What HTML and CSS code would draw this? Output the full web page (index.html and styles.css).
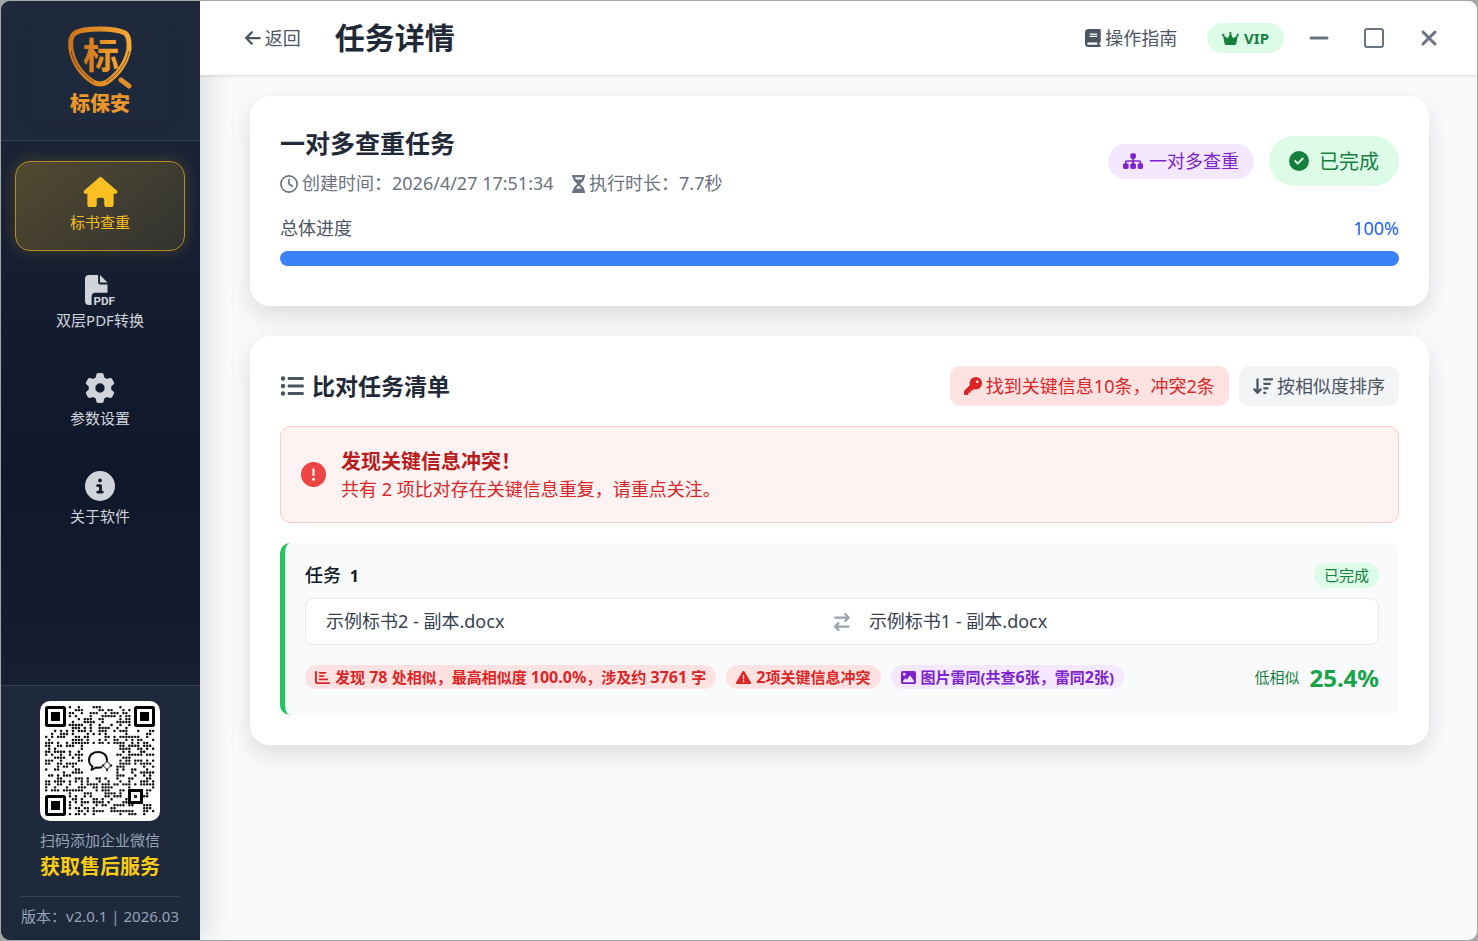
FILE: index.html
```html
<!DOCTYPE html>
<html lang="zh-CN">
<head>
	<meta charset="UTF-8">
	<title>任务详情</title>
	<link rel="stylesheet" href="styles.css">
</head>
<body>
	<div class="window">
		<aside class="sidebar">
			<div class="logo">
				<div class="logo-box">
					<svg class="logo-mark" viewBox="0 0 66 64" aria-hidden="true">
						<defs>
							<linearGradient id="gold" x1="0" y1="0" x2="1" y2="0">
								<stop offset="0" stop-color="#cf7418" />
								<stop offset="1" stop-color="#f5a733" />
							</linearGradient>
						</defs>
						<path d="M33 4C44 4 54 6 58 8C63 11 62 20 62 24C59 39 50 50 40 57Q33 61 26 57C15 50 6 38 4 24C3 15 4 11 8 8C13 5 23 4 33 4Z" fill="none" stroke="url(#gold)" stroke-width="5" />
						<path d="M4 26C7 40 17 51 27 57M62 26C59 40 49 51 39 57" fill="none" stroke="#1e293b" stroke-width="0.6" />
						<path d="M54 55L62 61" stroke="#e38f28" stroke-width="5" stroke-linecap="round" />
						<text class="logo-char" x="34" y="44" text-anchor="middle" fill="url(#gold)">标</text>
					</svg>
					<span class="logo-name">标保安</span>
				</div>
			</div>
			<nav class="menu">
				<a class="menu-item active" href="#">
					<svg class="menu-icon house" viewBox="0 0 576 512"><path d="M575.8 255.5c0 18-15 32.1-32 32.1l-32 0 .7 160.2c0 2.7-.2 5.4-.5 8.1l0 16.2c0 22.1-17.9 40-40 40l-16 0c-1.1 0-2.2 0-3.3-.1c-1.4 .1-2.8 .1-4.2 .1L416 512l-24 0c-22.1 0-40-17.9-40-40l0-24 0-64c0-17.7-14.3-32-32-32l-64 0c-17.7 0-32 14.3-32 32l0 64 0 24c0 22.1-17.9 40-40 40l-24 0-31.9 0c-1.5 0-3-.1-4.5-.2c-1.2 .1-2.4 .2-3.6 .2l-16 0c-22.1 0-40-17.9-40-40l0-112c0-.9 0-1.9 .1-2.8l0-69.7-32 0c-18 0-32-14-32-32.1c0-9 3-17 10-24L266.4 8c7-7 15-8 22-8s15 2 21 7L564.8 231.5c8 7 12 15 11 24z" /></svg>
					<span>标书查重</span>
				</a>
				<a class="menu-item" href="#">
					<svg class="menu-icon" viewBox="0 0 512 512"><path d="M0 64C0 28.7 28.7 0 64 0L224 0l0 128c0 17.7 14.3 32 32 32l128 0 0 144-208 0c-35.3 0-64 28.7-64 64l0 144-48 0c-35.3 0-64-28.7-64-64L0 64zm384 64l-128 0L256 0 384 128z" /><text class="pdf-text" x="512" y="508" text-anchor="end">PDF</text></svg>
					<span>双层PDF转换</span>
				</a>
				<a class="menu-item" href="#">
					<svg class="menu-icon" viewBox="0 0 512 512"><path d="M495.9 166.6c3.2 8.7 .5 18.4-6.4 24.6l-43.3 39.4c1.1 8.3 1.7 16.8 1.7 25.4s-.6 17.1-1.7 25.4l43.3 39.4c6.9 6.2 9.6 15.9 6.4 24.6c-4.4 11.9-9.7 23.3-15.8 34.3l-4.7 8.1c-6.6 11-14 21.4-22.1 31.2c-5.9 7.2-15.7 9.6-24.5 6.8l-55.7-17.7c-13.4 10.3-28.2 18.9-44 25.4l-12.5 57.1c-2 9.1-9 16.3-18.2 17.8c-13.8 2.3-28 3.5-42.5 3.5s-28.7-1.2-42.5-3.5c-9.2-1.5-16.2-8.7-18.2-17.8l-12.5-57.1c-15.8-6.5-30.6-15.1-44-25.4L83.1 425.9c-8.8 2.8-18.6 .3-24.5-6.8c-8.1-9.8-15.5-20.2-22.1-31.2l-4.7-8.1c-6.1-11-11.4-22.4-15.8-34.3c-3.2-8.7-.5-18.4 6.4-24.6l43.3-39.4C64.6 273.1 64 264.6 64 256s.6-17.1 1.7-25.4L22.4 191.2c-6.9-6.2-9.6-15.9-6.4-24.6c4.4-11.9 9.7-23.3 15.8-34.3l4.7-8.1c6.6-11 14-21.4 22.1-31.2c5.9-7.2 15.7-9.6 24.5-6.8l55.7 17.7c13.4-10.3 28.2-18.9 44-25.4l12.5-57.1c2-9.1 9-16.3 18.2-17.8C227.3 1.2 241.5 0 256 0s28.7 1.2 42.5 3.5c9.2 1.5 16.2 8.7 18.2 17.8l12.5 57.1c15.8 6.5 30.6 15.1 44 25.4l55.7-17.7c8.8-2.8 18.6-.3 24.5 6.8c8.1 9.8 15.5 20.2 22.1 31.2l4.7 8.1c6.1 11 11.4 22.4 15.8 34.3zM256 336a80 80 0 1 0 0-160 80 80 0 1 0 0 160z" /></svg>
					<span>参数设置</span>
				</a>
				<a class="menu-item" href="#">
					<svg class="menu-icon" viewBox="0 0 512 512"><path d="M256 512A256 256 0 1 0 256 0a256 256 0 1 0 0 512zM216 336l24 0 0-64-24 0c-13.3 0-24-10.7-24-24s10.7-24 24-24l48 0c13.3 0 24 10.7 24 24l0 88 8 0c13.3 0 24 10.7 24 24s-10.7 24-24 24l-80 0c-13.3 0-24-10.7-24-24s10.7-24 24-24zm40-208a32 32 0 1 1 0 64 32 32 0 1 1 0-64z" /></svg>
					<span>关于软件</span>
				</a>
			</nav>
			<div class="service">
				<svg class="qrcode" id="qrcode" viewBox="0 0 120 120" role="img" aria-label="二维码"></svg>
				<p class="service-tip">扫码添加企业微信</p>
				<p class="service-title">获取售后服务</p>
				<p class="version">版本：v2.0.1 | 2026.03</p>
			</div>
		</aside>

		<div class="main">
			<header class="topbar">
				<button class="text-btn" type="button">
					<svg class="icon" viewBox="0 0 448 512"><path d="M9.4 233.4c-12.5 12.5-12.5 32.8 0 45.3l160 160c12.5 12.5 32.8 12.5 45.3 0s12.5-32.8 0-45.3L109.2 288 416 288c17.7 0 32-14.3 32-32s-14.3-32-32-32l-306.7 0L214.6 118.6c12.5-12.5 12.5-32.8 0-45.3s-32.8-12.5-45.3 0l-160 160z" /></svg>
					返回
				</button>
				<h1>任务详情</h1>
				<div class="topbar-right">
					<button class="text-btn" type="button">
						<svg class="icon" viewBox="0 0 448 512"><path d="M96 0C43 0 0 43 0 96L0 416c0 53 43 96 96 96l288 0 32 0c17.7 0 32-14.3 32-32s-14.3-32-32-32l0-64c17.7 0 32-14.3 32-32l0-320c0-17.7-14.3-32-32-32L384 0 96 0zm0 384l256 0 0 64L96 448c-17.7 0-32-14.3-32-32s14.3-32 32-32zm32-240c0-8.8 7.2-16 16-16l192 0c8.8 0 16 7.2 16 16s-7.2 16-16 16l-192 0c-8.8 0-16-7.2-16-16zm16 48l192 0c8.8 0 16 7.2 16 16s-7.2 16-16 16l-192 0c-8.8 0-16-7.2-16-16s7.2-16 16-16z" /></svg>
						操作指南
					</button>
					<span class="vip">
						<svg class="icon-sm" viewBox="0 0 576 512"><path d="M309 106c11.4-7 19-19.7 19-34c0-22.1-17.9-40-40-40s-40 17.9-40 40c0 14.4 7.6 27 19 34L209.7 220.6c-9.1 18.2-32.7 23.4-48.6 10.7L72 160c5-6.7 8-15 8-24c0-22.1-17.9-40-40-40S0 113.9 0 136s17.9 40 40 40c.2 0 .5 0 .7 0L86.4 427.4c5.5 30.4 32 52.6 63 52.6l277.2 0c30.9 0 57.4-22.1 63-52.6L535.3 176c.2 0 .5 0 .7 0c22.1 0 40-17.9 40-40s-17.9-40-40-40s-40 17.9-40 40c0 9 3 17.3 8 24l-89.1 71.3c-15.9 12.7-39.5 7.5-48.6-10.7L309 106z" /></svg>
						VIP
					</span>
					<div class="win-btns">
						<button type="button" aria-label="最小化"><svg viewBox="0 0 24 24"><path d="M4 12H20" stroke-width="3" /></svg></button>
						<button type="button" aria-label="最大化"><svg viewBox="0 0 24 24"><rect x="3" y="3" width="18" height="18" rx="2" stroke-width="2" /></svg></button>
						<button type="button" aria-label="关闭"><svg viewBox="0 0 24 24"><path d="M6 6L18 18M18 6L6 18" stroke-width="3" /></svg></button>
					</div>
				</div>
			</header>

			<main class="content">
				<section class="card">
					<div class="card-head">
						<div>
							<h2>一对多查重任务</h2>
							<div class="meta">
								<span><svg class="icon" viewBox="0 0 512 512"><path d="M464 256A208 208 0 1 1 48 256a208 208 0 1 1 416 0zM0 256a256 256 0 1 0 512 0A256 256 0 1 0 0 256zM232 120l0 136c0 8 4 15.5 10.7 20l96 64c11 7.4 25.9 4.4 33.3-6.7s4.4-25.9-6.7-33.3L280 243.2 280 120c0-13.3-10.7-24-24-24s-24 10.7-24 24z" /></svg>创建时间：2026/4/27 17:51:34</span>
								<span><svg class="icon" viewBox="0 0 384 512"><path d="M32 0C14.3 0 0 14.3 0 32S14.3 64 32 64l0 11c0 42.4 16.9 83.1 46.9 113.1L146.7 256 78.9 323.9C48.9 353.9 32 394.6 32 437l0 11c-17.7 0-32 14.3-32 32s14.3 32 32 32l32 0 256 0 32 0c17.7 0 32-14.3 32-32s-14.3-32-32-32l0-11c0-42.4-16.9-83.1-46.9-113.1L237.3 256l67.9-67.9c30-30 46.9-70.7 46.9-113.1l0-11c17.7 0 32-14.3 32-32s-14.3-32-32-32L320 0 64 0 32 0zM96 75l0-11 192 0 0 11c0 19-5.6 37.4-16 53L112 128c-10.3-15.6-16-34-16-53zm16 309c3.5-5.3 7.6-10.3 12.1-14.9L192 301.3l67.9 67.9c4.6 4.6 8.6 9.6 12.1 14.9L112 384z" /></svg>执行时长：7.7秒</span>
							</div>
						</div>
						<div class="head-tags">
							<span class="type-tag"><svg class="icon" viewBox="0 0 576 512"><path d="M208 80c0-26.5 21.5-48 48-48l64 0c26.5 0 48 21.5 48 48l0 64c0 26.5-21.5 48-48 48l-8 0 0 40 152 0c30.9 0 56 25.1 56 56l0 32 8 0c26.5 0 48 21.5 48 48l0 64c0 26.5-21.5 48-48 48l-64 0c-26.5 0-48-21.5-48-48l0-64c0-26.5 21.5-48 48-48l8 0 0-32c0-4.4-3.6-8-8-8l-152 0 0 40 8 0c26.5 0 48 21.5 48 48l0 64c0 26.5-21.5 48-48 48l-64 0c-26.5 0-48-21.5-48-48l0-64c0-26.5 21.5-48 48-48l8 0 0-40-152 0c-4.4 0-8 3.6-8 8l0 32 8 0c26.5 0 48 21.5 48 48l0 64c0 26.5-21.5 48-48 48l-64 0c-26.5 0-48-21.5-48-48l0-64c0-26.5 21.5-48 48-48l8 0 0-32c0-30.9 25.1-56 56-56l152 0 0-40-8 0c-26.5 0-48-21.5-48-48l0-64z" /></svg>一对多查重</span>
							<span class="state-tag"><svg viewBox="0 0 512 512"><path d="M256 512A256 256 0 1 0 256 0a256 256 0 1 0 0 512zM369 209L241 337c-9.4 9.4-24.6 9.4-33.9 0l-64-64c-9.4-9.4-9.4-24.6 0-33.9s24.6-9.4 33.9 0l47 47L335 175c9.4-9.4 24.6-9.4 33.9 0s9.4 24.6 0 33.9z" /></svg>已完成</span>
						</div>
					</div>
					<div class="progress-label"><label for="progress">总体进度</label><span>100%</span></div>
					<progress id="progress" value="100" max="100"></progress>
				</section>

				<section class="card">
					<div class="list-head">
						<h3><svg viewBox="0 0 512 512"><path d="M64 144a48 48 0 1 0 0-96 48 48 0 1 0 0 96zM192 64c-17.7 0-32 14.3-32 32s14.3 32 32 32l288 0c17.7 0 32-14.3 32-32s-14.3-32-32-32L192 64zm0 160c-17.7 0-32 14.3-32 32s14.3 32 32 32l288 0c17.7 0 32-14.3 32-32s-14.3-32-32-32l-288 0zm0 160c-17.7 0-32 14.3-32 32s14.3 32 32 32l288 0c17.7 0 32-14.3 32-32s-14.3-32-32-32l-288 0zM64 464a48 48 0 1 0 0-96 48 48 0 1 0 0 96zm48-208a48 48 0 1 0 -96 0 48 48 0 1 0 96 0z" /></svg>比对任务清单</h3>
						<div class="list-btns">
							<button class="btn btn-red" type="button"><svg class="icon" viewBox="0 0 512 512"><path d="M336 352c97.2 0 176-78.8 176-176S433.2 0 336 0S160 78.8 160 176c0 18.7 2.9 36.8 8.3 53.7L7 391c-4.5 4.5-7 10.6-7 17l0 80c0 13.3 10.7 24 24 24l80 0c13.3 0 24-10.7 24-24l0-40 40 0c13.3 0 24-10.7 24-24l0-40 40 0c6.4 0 12.5-2.5 17-7l33.3-33.3c16.9 5.4 35 8.3 53.7 8.3zM376 96a40 40 0 1 1 0 80 40 40 0 1 1 0-80z" /></svg>找到关键信息10条，冲突2条</button>
							<button class="btn btn-gray" type="button"><svg class="icon" viewBox="0 0 576 512"><path d="M151.6 469.6C145.5 476.2 137 480 128 480s-17.5-3.8-23.6-10.4l-88-96c-11.9-13-11.1-33.3 2-45.2s33.3-11.1 45.2 2L96 365.7 96 64c0-17.7 14.3-32 32-32s32 14.3 32 32l0 301.7 32.4-35.4c11.9-13 32.2-13.9 45.2-2s13.9 32.2 2 45.2l-88 96zM320 480c-17.7 0-32-14.3-32-32s14.3-32 32-32l32 0c17.7 0 32 14.3 32 32s-14.3 32-32 32l-32 0zm0-128c-17.7 0-32-14.3-32-32s14.3-32 32-32l96 0c17.7 0 32 14.3 32 32s-14.3 32-32 32l-96 0zm0-128c-17.7 0-32-14.3-32-32s14.3-32 32-32l160 0c17.7 0 32 14.3 32 32s-14.3 32-32 32l-160 0zm0-128c-17.7 0-32-14.3-32-32s14.3-32 32-32l224 0c17.7 0 32 14.3 32 32s-14.3 32-32 32L320 96z" /></svg>按相似度排序</button>
						</div>
					</div>

					<div class="alert">
						<svg viewBox="0 0 512 512"><path d="M256 512A256 256 0 1 0 256 0a256 256 0 1 0 0 512zm0-384c13.3 0 24 10.7 24 24l0 112c0 13.3-10.7 24-24 24s-24-10.7-24-24l0-112c0-13.3 10.7-24 24-24zM224 352a32 32 0 1 1 64 0 32 32 0 1 1 -64 0z" /></svg>
						<div>
							<p class="alert-title">发现关键信息冲突！</p>
							<p class="alert-text">共有 2 项比对存在关键信息重复，请重点关注。</p>
						</div>
					</div>

					<div class="task">
						<div class="task-head">
							<h4>任务 <b>1</b></h4>
							<span class="task-state">已完成</span>
						</div>
						<div class="files">
							<span>示例标书2 - 副本.docx</span>
							<svg viewBox="0 0 448 512"><path d="M438.6 150.6c12.5-12.5 12.5-32.8 0-45.3l-96-96c-12.5-12.5-32.8-12.5-45.3 0s-12.5 32.8 0 45.3L338.7 96 32 96C14.3 96 0 110.3 0 128s14.3 32 32 32l306.7 0-41.4 41.4c-12.5 12.5-12.5 32.8 0 45.3s32.8 12.5 45.3 0l96-96zm-333.3 352c12.5 12.5 32.8 12.5 45.3 0s12.5-32.8 0-45.3L109.3 416 416 416c17.7 0 32-14.3 32-32s-14.3-32-32-32l-306.7 0 41.4-41.4c12.5-12.5 12.5-32.8 0-45.3s-32.8-12.5-45.3 0l-96 96c-12.5 12.5-12.5 32.8 0 45.3l96 96z" /></svg>
							<span>示例标书1 - 副本.docx</span>
						</div>
						<div class="task-foot">
							<span class="badge badge-red"><svg class="icon-sm" viewBox="0 0 512 512"><path d="M32 32c17.7 0 32 14.3 32 32l0 336c0 8.8 7.2 16 16 16l400 0c17.7 0 32 14.3 32 32s-14.3 32-32 32L80 480c-44.2 0-80-35.8-80-80L0 64C0 46.3 14.3 32 32 32zm96 64c0-17.7 14.3-32 32-32l192 0c17.7 0 32 14.3 32 32s-14.3 32-32 32l-192 0c-17.7 0-32-14.3-32-32zm32 80l128 0c17.7 0 32 14.3 32 32s-14.3 32-32 32l-128 0c-17.7 0-32-14.3-32-32s14.3-32 32-32zm0 112l256 0c17.7 0 32 14.3 32 32s-14.3 32-32 32l-256 0c-17.7 0-32-14.3-32-32s14.3-32 32-32z" /></svg><span>发现<b> 78 </b>处相似，最高相似度<b> 100.0%</b>，涉及约<b> 3761 </b>字</span></span>
							<span class="badge badge-red"><svg class="icon-sm" viewBox="0 0 512 512"><path d="M256 32c14.2 0 27.3 7.5 34.5 19.8l216 368c7.3 12.4 7.3 27.7 .2 40.1S486.3 480 472 480L40 480c-14.3 0-27.6-7.7-34.7-20.1s-7-27.8 .2-40.1l216-368C228.7 39.5 241.8 32 256 32zm0 128c-13.3 0-24 10.7-24 24l0 112c0 13.3 10.7 24 24 24s24-10.7 24-24l0-112c0-13.3-10.7-24-24-24zm32 224a32 32 0 1 0 -64 0 32 32 0 1 0 64 0z" /></svg><span><b>2</b>项关键信息冲突</span></span>
							<span class="badge badge-purple"><svg class="icon-sm" viewBox="0 0 512 512"><path d="M0 96C0 60.7 28.7 32 64 32l384 0c35.3 0 64 28.7 64 64l0 320c0 35.3-28.7 64-64 64L64 480c-35.3 0-64-28.7-64-64L0 96zM323.8 202.5c-4.5-6.6-11.9-10.5-19.8-10.5s-15.4 3.9-19.8 10.5l-87 127.6L170.7 297c-4.6-5.7-11.5-9-18.7-9s-14.2 3.3-18.7 9l-64 80c-5.8 7.2-6.9 17.1-2.9 25.4s12.4 13.6 21.6 13.6l96 0 32 0 208 0c8.9 0 17.1-4.9 21.2-12.8s3.6-17.4-1.4-24.7l-120-176zM112 192a48 48 0 1 0 0-96 48 48 0 1 0 0 96z" /></svg><span>图片雷同(共查<b>6</b>张，雷同<b>2</b>张)</span></span>
							<div class="score"><span>低相似</span><strong>25.4%</strong></div>
						</div>
					</div>
				</section>
			</main>
		</div>
	</div>
	<script src="qrcode.js"></script>
</body>
</html>
```
FILE: styles.css
```css
* { box-sizing:border-box; }
body { margin:0;background:#a3a6a3;font-size:18px;line-height:25px;font-family:"Noto Sans","Noto Sans CJK SC",sans-serif;color:#1f2937; }
h1,h2,h3,h4,p { margin:0; }
button { margin:0;padding:0;border:0;background:none;font:inherit;cursor:pointer; }
svg { flex:none;fill:currentColor; }
a { text-decoration:none; }
b { font-weight:700; }

.icon { height:18px; }
.icon-sm { height:15px; }

.window { display:flex;min-height:100vh;border:1px solid #a3a6a3;border-radius:10px;overflow:hidden;background:#f9fafb; }

/* 侧边栏 */
.sidebar { display:flex;flex-direction:column;width:199px;flex:none;background:linear-gradient(180deg,#1e293b 0%,#0f172a 50%,#1e293b 100%);box-shadow:4px 0 30px rgba(0,0,0,0.15); }
.logo { padding:20px 29px 20px 28px;background:#1e293b;border-bottom:1px solid #334155; }
.logo-box { display:flex;flex-direction:column;align-items:center;height:99px;border-radius:15px;box-shadow:0 8px 16px rgba(0,0,0,0.08); }
.logo-mark { width:66px;height:64px;margin-top:4px; }
.logo-char { font-size:36px;font-weight:700; }
.logo-name { font-size:20px;line-height:30px;font-weight:900;color:#e9962c; }

.menu { display:flex;flex-direction:column;gap:8px;flex:1;padding:20px 15px 20px 14px; }
.menu-item { display:flex;flex-direction:column;align-items:center;gap:2px;padding:15px 0;border:1px solid transparent;border-radius:15px;font-size:15px;color:#d1d5db; }
.menu-item span { line-height:26px; }
.menu-icon { height:30px;width:30px;overflow:visible; }
.house { width:35px; }
.menu-item.active { color:#fbbf24;border-color:#b68d22;background:linear-gradient(135deg,rgba(251,191,36,0.25),rgba(251,191,36,0.12));box-shadow:0 0 16px rgba(251,191,36,0.2); }
.pdf-text { font-family:Roboto,sans-serif;font-size:200px;font-weight:700; }

.service { display:flex;flex-direction:column;align-items:center;padding:15px 20px 11px 19px;background:#1e293b;border-top:1px solid #334155; }
.qrcode { width:120px;height:120px;margin-bottom:7px;border-radius:10px;background:#fff; }
.service-tip { font-size:15px;color:#94a3b8; }
.service-title { font-size:20px;line-height:27px;font-weight:700;color:#facc15; }
.version { align-self:stretch;margin-top:16px;padding-top:7px;border-top:1px solid #334155;font-size:15px;color:#94a3b8;white-space:nowrap;text-align:center; }

/* 顶部栏 */
.main { display:flex;flex-direction:column;flex:1;min-width:0; }
.topbar { position:relative;display:flex;align-items:center;height:74px;padding:0 36px 0 45px;background:#fff;box-shadow:0 1px 3px rgba(0,0,0,0.12); }
.topbar h1 { margin-left:34px;font-size:30px;line-height:40px; }
.text-btn { display:flex;align-items:center;gap:4px;color:#4b5563; }
.topbar-right { display:flex;align-items:center;gap:30px;margin-left:auto; }
.vip { display:flex;align-items:center;gap:5px;height:30px;padding:0 15px;border-radius:15px;background:#dcfce7;color:#15803d;font-size:15px;font-weight:700; }
.win-btns { display:flex;gap:31px;margin-left:-7px; }
.win-btns svg { display:block;width:24px;height:24px;fill:none;stroke:#6b7280;stroke-linecap:round; }

/* 卡片 */
.content { display:flex;flex-direction:column;gap:30px;padding:21px 48px 30px 50px; }
.card { padding:30px;border-radius:20px;background:#fff;box-shadow:0 10px 25px rgba(0,0,0,0.12); }
.card-head { display:flex;justify-content:space-between;align-items:center; }
.card-head h2 { font-size:25px;line-height:35px; }
.meta { display:flex;gap:18px;margin-top:10px;color:#6b7280; }
.meta span { display:flex;align-items:center;gap:4px; }
.head-tags { display:flex;align-items:center;gap:15px; }
.type-tag { display:flex;align-items:center;gap:6px;height:35px;padding:0 15px;border-radius:18px;background:#f3e8ff;color:#7e22ce; }
.state-tag { display:flex;align-items:center;gap:10px;height:50px;padding:0 20px;border-radius:25px;background:#dcfce7;color:#15803d;font-size:20px; }
.state-tag svg { width:20px;height:20px; }
.progress-label { display:flex;justify-content:space-between;margin:20px 0 10px;color:#4b5563; }
.progress-label span { color:#2563eb; }
progress { display:block;width:100%;height:15px;margin-bottom:10px;appearance:none;border:0;border-radius:8px;overflow:hidden; }
progress::-webkit-progress-bar { background:#e5e7eb; }
progress::-webkit-progress-value { background:#3b82f6; }

/* 任务清单 */
.list-head { display:flex;justify-content:space-between;align-items:center; }
.list-head h3 { display:flex;align-items:center;gap:8px;font-size:23px;line-height:30px; }
.list-head h3 svg { width:24px;height:24px;color:#4b5563; }
.list-btns { display:flex;gap:10px; }
.btn { display:flex;align-items:center;gap:4px;height:40px;padding:0 14px;border-radius:10px; }
.btn-red { background:#fee2e2;color:#dc2626; }
.btn-gray { background:#f3f4f6;color:#4b5563; }

.alert { display:flex;align-items:center;gap:15px;margin:20px 0;padding:20px;border:1px solid #fecaca;border-radius:10px;background:#fef2f2; }
.alert svg { width:25px;height:25px;color:#ef4444; }
.alert-title { font-size:20px;line-height:30px;font-weight:700;color:#b91c1c; }
.alert-text { color:#dc2626; }

.task { padding:20px;border-left:5px solid #22c55e;border-radius:10px;background:#f9fafb; }
.task-head { display:flex;justify-content:space-between;align-items:center;height:25px; }
.task-head h4 { font-weight:500;color:#111827; }
.task-head b { margin-left:4px;font-size:16px; }
.task-state { padding:0 10px;border-radius:13px;background:#dcfce7;color:#15803d;font-size:15px; }
.files { display:grid;grid-template-columns:1fr auto 1fr;align-items:center;gap:19px;margin:10px 0 15px;padding:10px 20px;border:1px solid #e5e7eb;border-radius:8px;background:#fff;color:#374151; }
.files svg { height:18px;color:#9ca3af; }
.task-foot { display:flex;align-items:center;gap:10px;height:34px; margin-bottom:1px; }
.badge { display:flex;align-items:center;gap:5px;height:24px;padding:0 10px;border-radius:12px;font-size:15px;line-height:24px;font-weight:700;white-space:nowrap; }
.badge b { font-size:16px; }
.badge-red { background:#fee2e2;color:#dc2626; }
.badge-purple { background:#f3e8ff;color:#7e22ce; }
.score { display:flex;align-items:center;gap:10px;margin-left:auto;font-size:15px;color:#15803d; }
.score strong { font-size:24px;color:#16a34a; }
```
FILE: qrcode.js
```js
(function () {
	var svg = document.getElementById('qrcode');
	var size = 37;
	var html = '';
	var seed = 20263;

	function rand() {
		seed = (seed * 1103 + 12345) % 65536;
		return seed / 65536;
	}

	// 定位角
	function finder(x, y) {
		html += '<rect x="' + (x + 1.5) + '" y="' + (y + 1.5) + '" width="18" height="18" rx="1" fill="#fff" stroke="#000" stroke-width="3"/>';
		html += '<rect x="' + (x + 6) + '" y="' + (y + 6) + '" width="9" height="9" fill="#000"/>';
	}

	function reserved(c, r) {
		if (r < 8 && (c < 8 || c > 28)) return true;
		if (r > 28 && c < 8) return true;
		if (r > 27 && r < 33 && c > 27 && c < 33) return true;
		return c > 12 && c < 24 && r > 12 && r < 24;
	}

	for (var r = 0; r < size; r++) {
		for (var c = 0; c < size; c++) {
			if (!reserved(c, r) && rand() < 0.47) {
				html += '<rect x="' + (5 + c * 2.97) + '" y="' + (5 + r * 2.97) + '" width="2.4" height="2.4" rx="0.8" fill="#111"/>';
			}
		}
	}

	finder(5, 5);
	finder(94, 5);
	finder(5, 94);
	html += '<rect x="89.5" y="89.5" width="12" height="12" fill="#fff" stroke="#000" stroke-width="3"/><rect x="94" y="94" width="3" height="3"/>';

	// 中间的企业微信标志
	html += '<path d="M67 59C67 54 63 51 58 51S49 54 49 59C49 62 50 64 52.5 65.5L51.5 69L56 66.5Q59 67 62 66" fill="none" stroke="#111" stroke-width="2" stroke-linejoin="round"/>';
	html += '<path d="M67 60.5l4 4-4 4-4-4z" fill="#fff" stroke="#111" stroke-width="1"/><circle cx="67" cy="60" r="1.2"/><circle cx="71" cy="64.5" r="1.2"/><circle cx="67" cy="69" r="1.2"/><circle cx="63" cy="64.5" r="1.2"/>';
	svg.innerHTML = html;
})();
```
